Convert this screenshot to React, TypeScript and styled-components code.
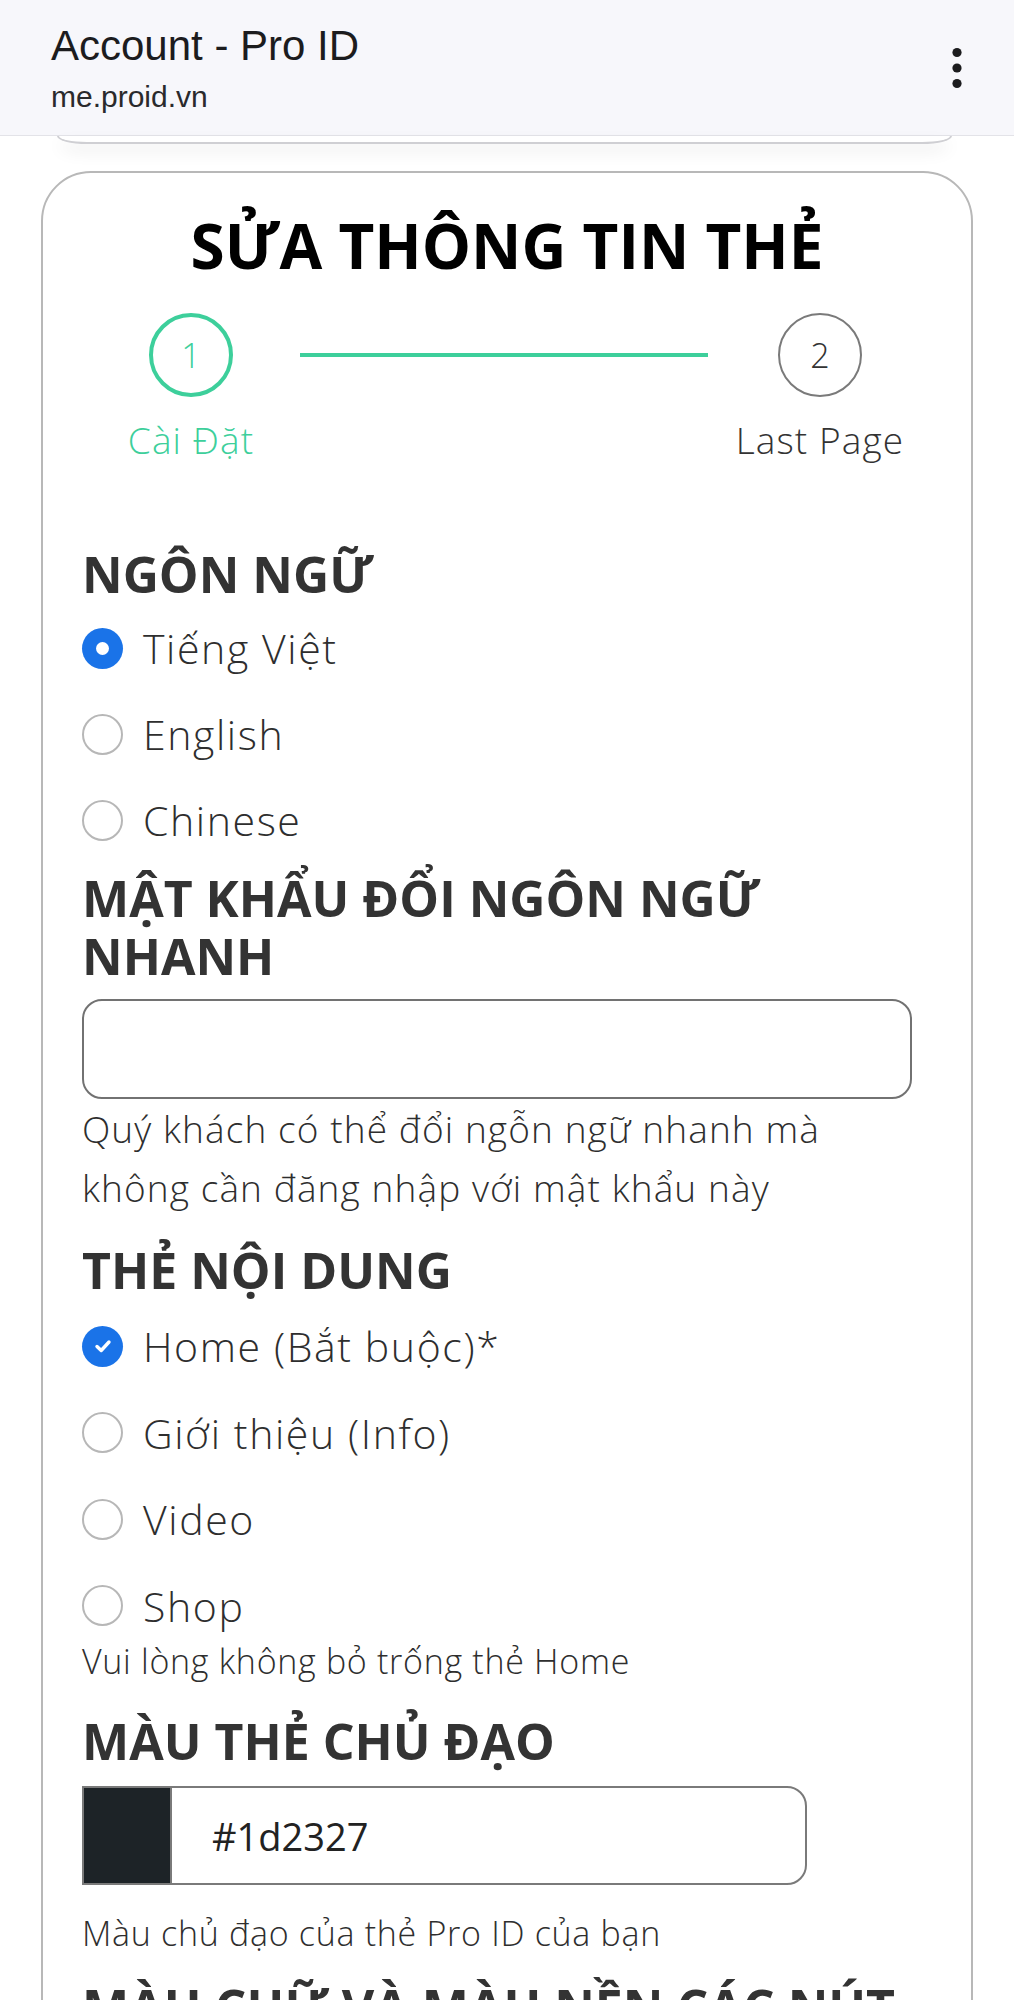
import React from "react";
import styled, { createGlobalStyle } from "styled-components";

const green = "#3dcf9b";
const blue = "#1a73e8";

const GlobalStyle = createGlobalStyle`
	html, body
	{
		margin: 0;
		padding: 0;
		background: #ffffff;
	}

	body
	{
		font-family: "Open Sans", "Noto Sans", sans-serif;
		color: #333333;
	}

	*
	{
		box-sizing: border-box;
	}
`;

const TopBar = styled.header`
	height: 136px;
	padding: 0 51px;

	display: flex;
	align-items: center;
	justify-content: space-between;

	background: #f7f7fb;
	border-bottom: 1px solid #e3e3e8;
`;

const PageTitle = styled.div`
	display: flex;
	flex-direction: column;
`;

const TabTitle = styled.div`
	font-family: "Liberation Sans", Arial, sans-serif;
	font-size: 42px;
	line-height: 50px;
	color: #1c1c1e;
`;

const TabUrl = styled.div`
	margin-top: 8px;
	font-family: "Liberation Sans", Arial, sans-serif;
	font-size: 30px;
	line-height: 36px;
	color: #2a2a2c;
`;

const PrevCardTail = styled.div`
	height: 8px;
	margin: 0 62px 0 57px;

	border: 2px solid #cfcfd3;
	border-top: none;
	border-radius: 0 0 30px 30px / 0 0 8px 8px;

	box-shadow: 0 8px 16px rgba(0, 0, 0, 0.08);
`;

const Card = styled.main`
	margin: 27px 41px 0;
	padding: 34px 39px 40px;

	border: 2px solid #b8b8b8;
	border-radius: 50px;
`;

const Title = styled.h1`
	margin: 0;

	font-size: 62px;
	line-height: 77px;
	font-weight: 700;
	text-align: center;
	color: #000000;
`;

const Stepper = styled.div`
	margin-top: 29px;

	display: grid;
	grid-template-columns: 218px 1fr 224px;
	align-items: start;
`;

const Step = styled.div`
	display: flex;
	flex-direction: column;
	align-items: center;
`;

const StepCircle = styled.div<{$active?: boolean}>`
	width: 84px;
	height: 84px;

	display: flex;
	align-items: center;
	justify-content: center;

	border: ${props => props.$active ? `4px solid ${green}` : "2px solid #7a7a7a"};
	border-radius: 50%;

	font-size: 34px;
	font-weight: 300;
	color: ${props => props.$active ? green : "#333333"};
`;

const StepLabel = styled.div<{$active?: boolean}>`
	margin-top: 21px;

	font-size: 37px;
	line-height: 44px;
	font-weight: 300;
	letter-spacing: 1.1px;
	color: ${props => props.$active ? green : "#333333"};
	white-space: nowrap;
`;

const StepLine = styled.div`
	height: 4px;
	margin-top: 40px;
	background: ${green};
`;

const Heading = styled.h2<{$top: number}>`
	margin: ${props => props.$top}px 0 0;

	font-size: 50px;
	line-height: 58px;
	font-weight: 700;
	color: #333333;
`;

const OptionList = styled.div<{$top: number, $gap: number}>`
	margin-top: ${props => props.$top}px;

	display: flex;
	flex-direction: column;
	gap: ${props => props.$gap}px;
`;

const OptionRow = styled.label`
	height: 70px;

	display: flex;
	align-items: center;
	gap: 20px;

	font-size: 41px;
	line-height: 50px;
	font-weight: 300;
	letter-spacing: 1.6px;
	color: #2e2e2e;
`;

const RadioMark = styled.span<{$checked?: boolean}>`
	width: 41px;
	height: 41px;
	flex: none;

	display: flex;
	align-items: center;
	justify-content: center;

	border-radius: 50%;
	border: ${props => props.$checked ? "none" : "2.5px solid #b7b7b7"};
	background: ${props => props.$checked ? blue : "#ffffff"};

	&::after
	{
		content: "";
		display: ${props => props.$checked ? "block" : "none"};
		width: 13px;
		height: 13px;
		border-radius: 50%;
		background: #ffffff;
	}
`;

const CheckMark = styled.span<{$checked?: boolean}>`
	width: 41px;
	height: 41px;
	flex: none;

	display: flex;
	align-items: center;
	justify-content: center;

	border-radius: 50%;
	border: ${props => props.$checked ? "none" : "2.5px solid #b7b7b7"};
	background: ${props => props.$checked ? blue : "#ffffff"};
`;

const TextField = styled.div`
	width: calc(100% - 20px);
	height: 100px;
	margin-top: 14.5px;

	border: 2px solid #727272;
	border-radius: 20px;
`;

const HelpText = styled.p<{$large?: boolean, $top?: number}>`
	width: calc(100% - 20px);
	margin: ${props => props.$top ?? 0}px 0 0;

	font-size: ${props => props.$large ? 37 : 34}px;
	line-height: ${props => props.$large ? 59 : 40}px;
	font-weight: 300;
	letter-spacing: ${props => props.$large ? 1.1 : 0.7}px;
	color: #2e2e2e;
`;

const ColorField = styled.div`
	width: 725px;
	height: 99px;
	margin-top: 16.5px;

	display: flex;
`;

const Swatch = styled.div<{$colour: string}>`
	width: 88px;
	flex: none;

	background: ${props => props.$colour};
	border: 2px solid #7a7a7a;
	border-right: none;
`;

const ColorValue = styled.div`
	flex: 1;
	padding-left: 40px;

	display: flex;
	align-items: center;

	border: 2px solid #7a7a7a;
	border-radius: 0 20px 20px 0;

	font-size: 38px;
	color: #222222;
`;

function MenuDots ()
{
	return (
		<svg width = "12" height = "44" viewBox = "0 0 12 44">
			<circle cx = "6" cy = "6.5" r = "4.6" fill = "#1c1c1e"/>
			<circle cx = "6" cy = "22" r = "4.6" fill = "#1c1c1e"/>
			<circle cx = "6" cy = "37.5" r = "4.6" fill = "#1c1c1e"/>
		</svg>
	);
}

function Tick ()
{
	return (
		<svg width = "22" height = "22" viewBox = "0 0 22 22">
			<path d = "M5 11.5 L9.2 15.5 L17 7" fill = "none" stroke = "#ffffff" strokeWidth = "3.4" strokeLinecap = "round" strokeLinejoin = "round"/>
		</svg>
	);
}

const languages = [
	{label: "Tiếng Việt", checked: true},
	{label: "English", checked: false},
	{label: "Chinese", checked: false}
];

const tabs = [
	{label: "Home (Bắt buộc)*", checked: true},
	{label: "Giới thiệu (Info)", checked: false},
	{label: "Video", checked: false},
	{label: "Shop", checked: false}
];

export default function App ()
{
	return (
		<>
			<GlobalStyle/>
			<TopBar>
				<PageTitle>
					<TabTitle>Account - Pro ID</TabTitle>
					<TabUrl>me.proid.vn</TabUrl>
				</PageTitle>
				<MenuDots/>
			</TopBar>
			<PrevCardTail/>

			<Card>
				<Title>SỬA THÔNG TIN THẺ</Title>

				<Stepper>
					<Step>
						<StepCircle $active>1</StepCircle>
						<StepLabel $active>Cài Đặt</StepLabel>
					</Step>
					<StepLine/>
					<Step>
						<StepCircle>2</StepCircle>
						<StepLabel>Last Page</StepLabel>
					</Step>
				</Stepper>

				<Heading $top = {82.5}>NGÔN NGỮ</Heading>
				<OptionList $top = {10.5} $gap = {16}>
				{
					languages.map(item =>
						<OptionRow key = {item.label}>
							<RadioMark $checked = {item.checked}/>
							{item.label}
						</OptionRow>
					)
				}
				</OptionList>

				<Heading $top = {13.5}>MẬT KHẨU ĐỔI NGÔN NGỮ NHANH</Heading>
				<TextField/>
				<HelpText $large>
					Quý khách có thể đổi ngỗn ngữ nhanh mà không cần đăng nhập với mật khẩu này
				</HelpText>

				<Heading $top = {23.5}>THẺ NỘI DUNG</Heading>
				<OptionList $top = {12.5} $gap = {16.5}>
				{
					tabs.map(item =>
						<OptionRow key = {item.label}>
							<CheckMark $checked = {item.checked}>
								{item.checked && <Tick/>}
							</CheckMark>
							{item.label}
						</OptionRow>
					)
				}
				</OptionList>
				<HelpText>Vui lòng không bỏ trống thẻ Home</HelpText>

				<Heading $top = {31}>MÀU THẺ CHỦ ĐẠO</Heading>
				<ColorField>
					<Swatch $colour = "#1d2327"/>
					<ColorValue>#1d2327</ColorValue>
				</ColorField>
				<HelpText $top = {28}>Màu chủ đạo của thẻ Pro ID của bạn</HelpText>

				<Heading $top = {24.5}>MÀU CHỮ VÀ MÀU NỀN CÁC NÚT</Heading>
			</Card>
		</>
	);
}
